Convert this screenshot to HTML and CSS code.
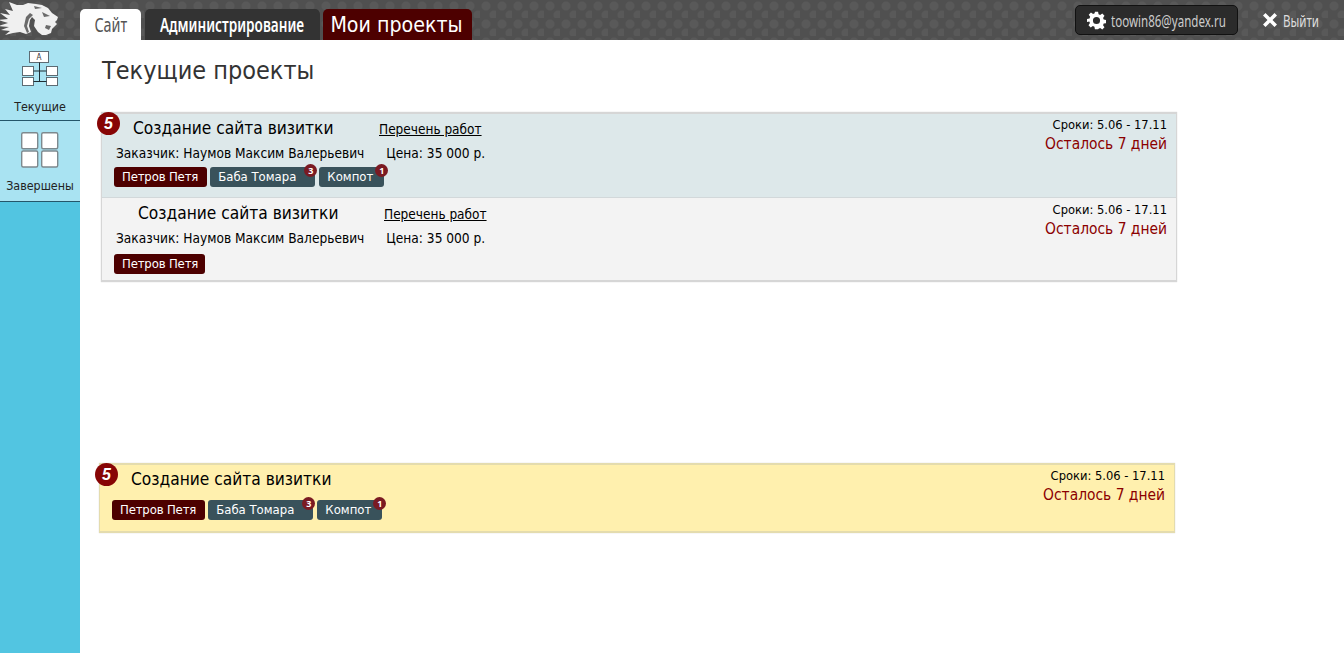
FILE: index.html
```html
<!DOCTYPE html>
<html lang="ru">
<head>
<meta charset="utf-8">
<title>Текущие проекты</title>
<link rel="stylesheet" href="styles.css">
</head>
<body>
<header class="topbar">
  <svg class="logo" viewBox="0 0 60 40" width="60" height="40">
    <path fill="#f0f0f0" d="M9 2l8 3 6 0 5-2 8 1 6 1 6 3 4 5 6 4-1 3-2 2 2 2-3 3-2 2-1 4-5 2-4 0-4-3-4-6 1-6-3-3-2 3-1 6 2 6-5 2-6-2-7 1-8 2 5-4-9-1 8-3-11-1 10-3-10-3 10-1-8-6 10 2-5-6 8 2z"/>
    <path fill="#6a6a6a" d="M30 13l-4 4-2 9 3 7 2-1-2-6 2-7 4-4zM42 12l8 4-6 1zM46 25l5 1-2 4-4-2zM34 6l8 2-7 1z"/>
  </svg>
  <nav class="tabs">
    <a class="tab tab-site"><span class="narrow">Сайт</span></a>
    <a class="tab tab-admin"><span class="narrow narrow-bold">Администрирование</span></a>
    <a class="tab tab-mine">Мои проекты</a>
  </nav>
  <div class="user">
    <svg class="gear" viewBox="0 0 24 24" width="19" height="19">
      <path fill="#fff" fill-rule="evenodd" d="M10 1h4l.6 3.200 2 .8 2.700-1.800 2.800 2.800-1.800 2.700.8 2 3.200.6v4l-3.200.6-.8 2 1.800 2.700-2.800 2.800-2.700-1.800-2 .8L14 23h-4l-.6-3.200-2-.8-2.700 1.800-2.800-2.800 1.800-2.700-.8-2L0 14v-4l3.200-.6.8-2-1.800-2.700L5 1.900l2.700 1.800 2-.8zM12 7.500a4.500 4.500 0 1 0 0 9 4.500 4.500 0 0 0 0-9z"/>
    </svg>
    <span class="narrow-user">toowin86@yandex.ru</span>
  </div>
  <a class="logout">
    <svg viewBox="0 0 16 16" width="16" height="16"><path fill="#fff" d="M3.500 1L8 5.500 12.500 1 15 3.500 10.500 8l4.500 4.500-2.500 2.500L8 10.500 3.500 15 1 12.500 5.500 8 1 3.500z"/></svg>
    <span class="narrow-exit">Выйти</span>
  </a>
</header>
<div class="page">
  <aside class="sidebar">
    <a class="side-item">
      <svg class="side-icon" viewBox="0 0 40 38" width="40" height="38">
        <g fill="#fff" stroke="#5d6b73" stroke-width="1">
          <rect x="9.500" y="1.500" width="19" height="11"/>
          <rect x="2.500" y="16.500" width="11" height="9"/>
          <rect x="26.500" y="16.500" width="11" height="9"/>
          <rect x="2.500" y="27.500" width="11" height="8"/>
          <rect x="26.500" y="27.500" width="11" height="8"/>
        </g>
        <path stroke="#1f2d33" fill="none" d="M19.500 12.500V31.500M13.500 21h13M13.500 31.500h13"/>
        <text x="19" y="10" class="icon-letter">A</text>
      </svg>
      <span class="side-label side-label-1">Текущие</span>
    </a>
    <a class="side-item side-item-2">
      <svg class="side-icon" viewBox="0 0 40 38" width="40" height="38">
        <g fill="#fff" stroke="#7d898e" stroke-width="1.400">
          <rect x="1.700" y="1.700" width="16" height="16" rx="1.500"/>
          <rect x="21.700" y="1.700" width="16" height="16" rx="1.500"/>
          <rect x="1.700" y="20" width="16" height="16" rx="1.500"/>
          <rect x="21.700" y="20" width="16" height="16" rx="1.500"/>
        </g>
      </svg>
      <span class="side-label">Завершены</span>
    </a>
  </aside>
  <main class="content">
    <h1 class="title">Текущие проекты</h1>
    <section class="card">
      <article class="row row-blue">
        <span class="count">5</span>
        <div class="row-main">
          <div class="line-head"><span class="name">Создание сайта визитки</span><a class="works">Перечень работ</a></div>
          <div class="line-info"><span>Заказчик: Наумов Максим Валерьевич</span><span>Цена: 35 000 р.</span></div>
          <div class="people">
            <span class="chip chip-red">Петров Петя</span>
            <span class="chip chip-slate chip-wide">Баба Томара<i class="mini">3</i></span>
            <span class="chip chip-slate">Компот<i class="mini">1</i></span>
          </div>
        </div>
        <div class="dates"><div class="term">Сроки: 5.06 - 17.11</div><div class="left">Осталось 7 дней</div></div>
      </article>
      <article class="row row-gray">
        <div class="row-main">
          <div class="line-head shifted"><span class="name">Создание сайта визитки</span><a class="works">Перечень работ</a></div>
          <div class="line-info"><span>Заказчик: Наумов Максим Валерьевич</span><span>Цена: 35 000 р.</span></div>
          <div class="people people-gap">
            <span class="chip chip-red chip-solo">Петров Петя</span>
          </div>
        </div>
        <div class="dates"><div class="term">Сроки: 5.06 - 17.11</div><div class="left">Осталось 7 дней</div></div>
      </article>
    </section>
    <section class="card card-yellow">
      <article class="row row-yellow">
        <span class="count">5</span>
        <div class="row-main">
          <div class="line-head"><span class="name">Создание сайта визитки</span></div>
          <div class="people people-yellow">
            <span class="chip chip-red">Петров Петя</span>
            <span class="chip chip-slate chip-wide">Баба Томара<i class="mini">3</i></span>
            <span class="chip chip-slate">Компот<i class="mini">1</i></span>
          </div>
        </div>
        <div class="dates"><div class="term">Сроки: 5.06 - 17.11</div><div class="left">Осталось 7 дней</div></div>
      </article>
    </section>
  </main>
</div>
</body>
</html>
```
FILE: styles.css
```css
* { box-sizing: border-box; }
html, body { height: 100%; }
body {
  margin: 0;
  overflow: hidden;
  background: #fff;
  color: #000;
  font-family: "DejaVu Sans Condensed", "DejaVu Sans", sans-serif;
  font-stretch: condensed;
}
a { color: inherit; }

/* top bar */
.topbar {
  height: 40px;
  display: flex;
  align-items: flex-end;
  background-color: #505050;
  background-image:
    radial-gradient(circle at 6px 6px, #595959 0 4px, transparent 5px),
    radial-gradient(circle at 14px 15px, #595959 0 4px, transparent 5px);
  background-size: 16px 18px;
}
.logo { flex: none; display: block; }
.tabs { display: flex; margin-left: 20px; gap: 4px; }
.tab {
  height: 31px;
  border-radius: 5px 5px 0 0;
  display: flex;
  align-items: center;
  justify-content: center;
  white-space: nowrap;
}
.narrow { display: inline-block; font-family: "Noto Sans", sans-serif; font-stretch: normal; font-size: 20px; transform: scaleX(0.72); }
.narrow-bold { font-weight: 600; transform: scaleX(0.68); }
.tab-site { width: 61px; background: #fff; color: #555; }
.tab-admin { width: 175px; background: #333; color: #fff; }
.tab-mine { width: 149px; margin-left: -1px; padding-right: 2px; background: #4d0000; color: #fff; font-size: 21.200px; }
.user {
  margin-left: auto;
  margin-bottom: 5px;
  width: 163px;
  height: 30px;
  background: #2b2b2b;
  border: 1px solid #111;
  border-radius: 5px;
  display: flex;
  align-items: center;
  padding-left: 11px;
  color: #ccc;
}
.gear { flex: none; }
.narrow-user { display: inline-block; font-family: "Noto Sans", sans-serif; font-stretch: normal; font-size: 17px; transform: scaleX(0.68); transform-origin: left center; white-space: nowrap; margin-left: 5px; }
.logout {
  width: 82px;
  margin-left: 24px;
  height: 40px;
  display: flex;
  align-items: center;
  color: #ddd;
}
.logout svg { flex: none; }
.narrow-exit { display: inline-block; font-family: "Noto Sans", sans-serif; font-stretch: normal; font-size: 17px; transform: scaleX(0.68); transform-origin: left center; margin-left: 5px; }

/* layout */
.page { display: flex; height: 613px; }
.sidebar {
  width: 80px;
  flex: none;
  background: #52c5e1;
}
.side-item {
  display: flex;
  flex-direction: column;
  align-items: center;
  height: 81px;
  border-bottom: 1px solid #24566a;
  padding-top: 10px;
  background: #a9e3f2;
}
.side-icon { display: block; flex: none; }
.side-label { font-size: 12.400px; line-height: 16px; color: #222; margin-top: 9px; white-space: nowrap; }
.side-label-1 { margin-top: 11px; }
.icon-letter { font-size: 8px; text-anchor: middle; fill: #333; }

.content { flex: 1; padding: 0 0 0 21px; min-width: 0; }
.title {
  margin: 14px 0 0;
  height: 58px;
  font-size: 25px;
  line-height: 33px;
  font-weight: 400;
  color: #333;
  padding-left: 1px;
  white-space: nowrap;
}

/* cards */
.card {
  width: 1076px;
  border: 1px solid #d6d6d6;
  border-bottom-width: 2px;
  border-top-width: 2px;
  box-shadow: 0 0 1px #ccc;
}
.card-yellow { margin: 181px 0 0 -2px; border-color: #e4dcae; }
.row { position: relative; display: flex; justify-content: space-between; }
.row-blue { height: 84px; background: #dde8ea; border-bottom: 1px solid #d2d8da; }
.row-gray { height: 82px; background: #f3f3f3; }
.row-yellow { height: 66px; background: #fff0ae; }
.count {
  position: absolute;
  left: -5px;
  top: -2px;
  width: 23px;
  height: 23px;
  border-radius: 50%;
  background: #870505;
  color: #fff;
  font: italic 700 16px/23px "Liberation Sans", sans-serif;
  text-align: center;
}
.row-main { padding: 3px 0 0 12px; }
.line-head { display: flex; align-items: baseline; padding-left: 19px; height: 24px; }
.line-head.shifted { padding: 1px 0 0 24px; }
.name { font-size: 17.200px; line-height: 22px; width: 246px; white-space: nowrap; }
.works { font-size: 13.500px; line-height: 20px; text-decoration: underline; white-space: nowrap; }
.line-info { display: flex; gap: 22px; font-size: 13.600px; line-height: 20px; margin-top: 3px; padding-left: 2px; white-space: nowrap; }
.row-blue .line-info { margin-top: 2px; }
.people { display: flex; gap: 3px; margin-top: 4px; }
.people-gap { margin-top: 6px; }
.people-yellow { margin-top: 8px; }
.chip {
  position: relative;
  display: block;
  height: 20px;
  padding: 0 11px 0 8px;
  border-radius: 3px;
  color: #fff;
  font-size: 13px;
  line-height: 20px;
  white-space: nowrap;
}
.chip-red { background: #4d0000; padding: 0 9px 0 8px; letter-spacing: -.15px; }
.chip-solo { padding-right: 7px; }
.chip-slate { background: #39525b; }
.chip-wide { padding-right: 19px; margin-right: 1px; }
.mini {
  position: absolute;
  right: -4px;
  top: -3px;
  width: 13px;
  height: 13px;
  border-radius: 50%;
  background: #7a1a22;
  color: #fff;
  font: 700 9px/13px "Noto Sans", sans-serif;
  text-align: center;
}
.chip-wide .mini { right: -2px; }
.dates { text-align: right; padding: 2px 9px 0 0; }
.row-gray .dates { padding-top: 3px; }
.term { font-size: 12.800px; line-height: 18px; white-space: nowrap; }
.left { font-size: 15.400px; line-height: 20px; color: #8b0000; white-space: nowrap; }
```
